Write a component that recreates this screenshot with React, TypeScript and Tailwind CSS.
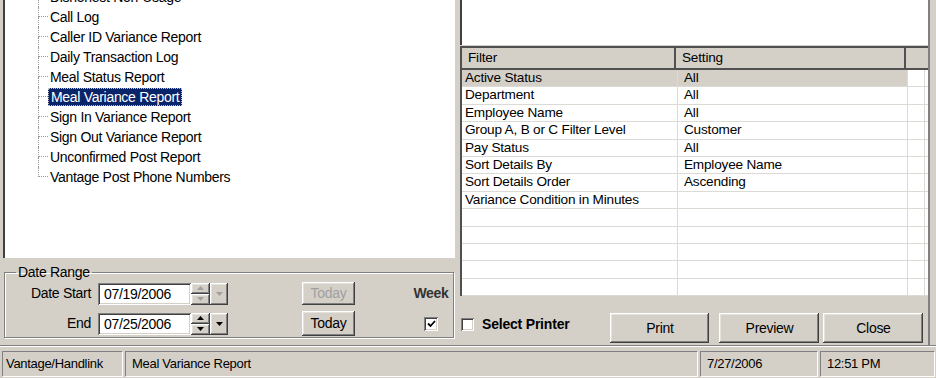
const bevelOut =
  "shadow-[inset_-1px_-1px_0_#404040,inset_1px_1px_0_#ffffff,inset_-2px_-2px_0_#808080,inset_2px_2px_0_#e4e2dc]";
const bevelIn =
  "shadow-[inset_1px_1px_0_#808080,inset_-1px_-1px_0_#ffffff,inset_2px_2px_0_#404040,inset_-2px_-2px_0_#d4d0c8]";

const reports = [
  "Dishonest Non-Usage",
  "Call Log",
  "Caller ID Variance Report",
  "Daily Transaction Log",
  "Meal Status Report",
  "Meal Variance Report",
  "Sign In Variance Report",
  "Sign Out Variance Report",
  "Unconfirmed Post Report",
  "Vantage Post Phone Numbers",
];

const filters: [string, string][] = [
  ["Active Status", "All"],
  ["Department", "All"],
  ["Employee Name", "All"],
  ["Group A, B or C Filter Level", "Customer"],
  ["Pay Status", "All"],
  ["Sort Details By", "Employee Name"],
  ["Sort Details Order", "Ascending"],
  ["Variance Condition in Minutes", ""],
  ["", ""],
  ["", ""],
  ["", ""],
  ["", ""],
  ["", ""],
];

const Arrow = ({ up, disabled }: { up?: boolean; disabled?: boolean }) => (
  <svg width="7" height="4" viewBox="0 0 7 4">
    <polygon
      points={up ? "3.5,0 7,4 0,4" : "0,0 7,0 3.5,4"}
      fill={disabled ? "#a0a0a0" : "#000000"}
    />
  </svg>
);

const DateField = ({ value, disabled }: { value: string; disabled?: boolean }) => (
  <div className="flex h-[22px]">
    <div className={`w-[93px] bg-white pl-[6px] text-[14px] leading-[22px] tracking-[-0.3px] ${bevelIn}`}>
      {value}
    </div>
    <div className="flex w-[19px] flex-col">
      <div className={`flex flex-1 items-center justify-center bg-[#d4d0c8] ${bevelOut}`}>
        <Arrow up disabled={disabled} />
      </div>
      <div className={`flex flex-1 items-center justify-center bg-[#d4d0c8] ${bevelOut}`}>
        <Arrow disabled={disabled} />
      </div>
    </div>
    <div className={`flex w-[18px] items-center justify-center bg-[#d4d0c8] ${bevelOut}`}>
      <Arrow disabled={disabled} />
    </div>
  </div>
);

export default function App() {
  return (
    <div className="flex h-[378px] w-[936px] flex-col overflow-hidden bg-[#d4d0c8] font-['Liberation_Sans',Arial,sans-serif] text-black">
      <div className="flex h-[350px] flex-col pb-[4px]">
        <div className="flex min-h-0 flex-1 border-b border-[#808080] shadow-[0_1px_0_#ffffff]">
          {/* left side: report tree + date range */}
          <div className="flex w-[458px] flex-col">
            <div className="ml-[3px] h-[258px] w-[452px] overflow-hidden border-l-2 border-[#404040] bg-white">
              <ul className="mt-[-12px] pl-[33px] text-[14px] tracking-[-0.3px]">
                {reports.map((r, i) => {
                  const last = i === reports.length - 1;
                  const selected = r === "Meal Variance Report";
                  return (
                    <li key={r} className={`flex ${i === 0 ? "h-[19px]" : "h-[20px]"}`}>
                      <div className="flex w-[10px] flex-col">
                        <div className="h-[10px] border-b border-l border-dotted border-[#9a9a9a]" />
                        {!last && <div className="flex-1 border-l border-dotted border-[#9a9a9a]" />}
                      </div>
                      <span
                        className={
                          selected
                            ? "my-[1px] border border-dotted border-[#c0c0c0] bg-[#0a246a] px-[2px] leading-[16px] text-white"
                            : `px-[2px] ${i === 0 ? "leading-[19px]" : "leading-[20px]"}`
                        }
                      >
                        {r}
                      </span>
                    </li>
                  );
                })}
              </ul>
            </div>

            <fieldset className="mt-[6px] ml-[4px] h-[74px] w-[450px] border border-[#808080] px-[2px] shadow-[inset_1px_1px_0_#ffffff,1px_1px_0_#ffffff]">
              <legend className="ml-[9px] px-[2px] text-[14px] leading-[16px] tracking-[-0.3px]">Date Range</legend>
              <div className="mt-[2px] flex flex-col gap-[6px] text-[14px] tracking-[-0.3px]">
                <div className="flex items-center">
                  <span className="w-[84px] text-right">Date Start</span>
                  <div className="ml-[7px]">
                    <DateField value="07/19/2006" disabled />
                  </div>
                  <div className={`ml-[74px] flex h-[23px] w-[53px] items-center justify-center text-[#a0a0a0] ${bevelOut}`}>
                    Today
                  </div>
                  <span className="ml-[56px] w-[40px] text-center font-bold text-[#333333]">Week</span>
                </div>
                <div className="flex items-center">
                  <span className="w-[84px] text-right">End</span>
                  <div className="ml-[7px]">
                    <DateField value="07/25/2006" />
                  </div>
                  <div className={`ml-[74px] flex h-[25px] w-[53px] items-center justify-center ${bevelOut}`}>
                    Today
                  </div>
                  <div className="ml-[56px] flex w-[40px] justify-center">
                    <div className={`flex h-[14px] w-[14px] items-center justify-center bg-white ${bevelIn}`}>
                      <svg width="9" height="8" viewBox="0 0 9 8">
                        <polyline points="1,3.5 3.5,6 8,1" fill="none" stroke="#000" strokeWidth="1.8" />
                      </svg>
                    </div>
                  </div>
                </div>
              </div>
            </fieldset>
          </div>

          {/* right side: filters */}
          <div className="mr-[6px] flex flex-1 flex-col border-r-2 border-[#808080] pl-[2px]">
            <div className="h-[45px] border-l-2 border-[#404040] bg-white" />
            <div className="mt-[1px] flex h-[250px] flex-col border-l-2 border-t-2 border-[#505050] bg-white text-[13.6px] tracking-[-0.2px]">
              <div className="flex h-[22px] border-b-2 border-[#505050] bg-[#d4d0c8]">
                <div className="w-[214px] border-r-2 border-[#505050] pl-[6px] leading-[20px]">Filter</div>
                <div className="w-[230px] border-r-2 border-[#505050] pl-[6px] leading-[20px]">Setting</div>
                <div className="w-[17px]" />
              </div>
              <div className="flex flex-1 flex-col">
                {filters.map(([f, s], i) => (
                  <div key={i} className="flex flex-1 border-b border-[#dcdad4]">
                    <div
                      className={`w-[216px] border-r border-[#dcdad4] pl-[3px] leading-[16px] ${i === 0 ? "bg-[#d4d0c8]" : ""}`}
                    >
                      {f}
                    </div>
                    <div
                      className={`w-[230px] border-r border-[#dcdad4] pl-[6px] leading-[16px] ${i === 0 ? "bg-[#d4d0c8]" : ""}`}
                    >
                      {s}
                    </div>
                    <div className="w-[17px] border-r border-[#dcdad4]" />
                  </div>
                ))}
              </div>
            </div>
            <div className="flex flex-1 items-end pb-[2px]">
              <div className="mb-[8px] ml-[1px] flex items-center">
                <div className={`h-[13px] w-[13px] bg-white ${bevelIn}`} />
                <span className="ml-[8px] text-[14px] font-bold tracking-[-0.2px]">Select Printer</span>
              </div>
              <div className={`ml-[41px] flex h-[30px] w-[99px] items-center justify-center text-[14px] tracking-[-0.3px] ${bevelOut}`}>
                Print
              </div>
              <div className={`ml-[10px] flex h-[30px] w-[100px] items-center justify-center text-[14px] tracking-[-0.3px] ${bevelOut}`}>
                Preview
              </div>
              <div className={`ml-[4px] flex h-[30px] w-[100px] items-center justify-center text-[14px] tracking-[-0.3px] ${bevelOut}`}>
                Close
              </div>
            </div>
          </div>
        </div>
      </div>

      {/* status bar */}
      <div className="flex h-[28px] gap-[3px] px-[2px] pb-[2px] pt-[1px] text-[13px] tracking-[-0.3px]">
        <div className="w-[120px] border-l border-t border-[#808080] pl-[3px] leading-[24px] shadow-[1px_1px_0_#ffffff]">
          Vantage/Handlink
        </div>
        <div className="w-[572px] border-l border-t border-[#808080] pl-[6px] leading-[24px] shadow-[1px_1px_0_#ffffff]">
          Meal Variance Report
        </div>
        <div className="w-[117px] border-l border-t border-[#808080] pl-[6px] leading-[24px] shadow-[1px_1px_0_#ffffff]">
          7/27/2006
        </div>
        <div className="flex-1 border-l border-t border-[#808080] pl-[6px] leading-[24px] shadow-[1px_1px_0_#ffffff]">
          12:51 PM
        </div>
      </div>
    </div>
  );
}
